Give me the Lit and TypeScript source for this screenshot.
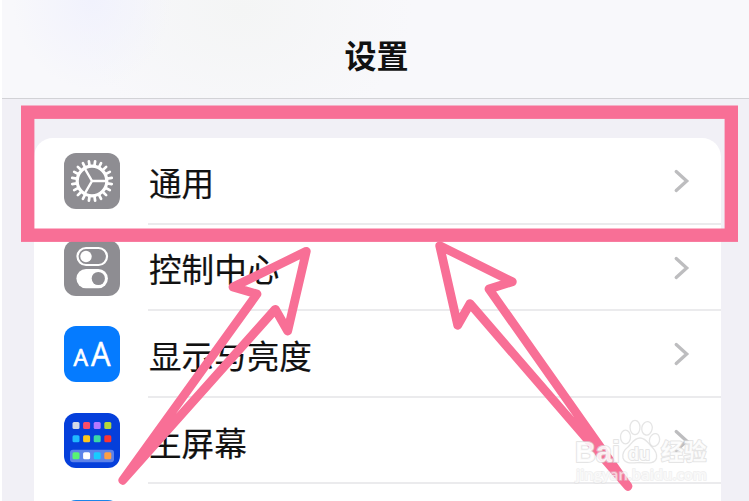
import { LitElement, html, css, svg } from "lit";
import { customElement, property } from "lit/decorators.js";

const APP_COLORS = [
  ["#d5dae6", "#fb4d68", "#b478ff", "#b4d83c"],
  ["#1fb8ff", "#ffc71c", "#3bd8a5", "#fb3434"],
  ["#58f573", "#ffffff", "#17cbff", "#ff9f45"],
];

const TEETH = Array.from({ length: 20 }, (_, i) => i * 18);

@customElement("setting-icon")
export class SettingIcon extends LitElement {
  static styles = css`
    :host {
      display: block;
      width: 56px;
      height: 56px;
    }

    svg {
      display: block;
    }

    .letters {
      font-family: "Open Sans", "Noto Sans", sans-serif;
      fill: #fff;
    }
  `;

  @property()
  name = "";

  private _gear() {
    return svg`
      <rect width="56" height="56" rx="12" fill="#8e8d92" />
      <g stroke="#fff" fill="none">
        ${TEETH.map(
          (a) => svg`<path
            d="M28 8V12.500"
            stroke-width="2.700"
            stroke-linecap="round"
            transform="rotate(${a + 9} 28 28)"
          />`
        )}
        <circle cx="28" cy="28" r="14.800" stroke-width="3.200" />
        <path d="M28 28H43M28 28L20.500 15M28 28L20.500 41" stroke-width="2.500" />
      </g>
    `;
  }

  private _switches() {
    return svg`
      <rect width="56" height="56" rx="12" fill="#8e8d92" />
      <rect x="13.500" y="8" width="29.500" height="17" rx="8.500" fill="none" stroke="#fff" stroke-width="2.200" />
      <circle cx="22" cy="16.500" r="5.700" fill="#fff" />
      <rect x="12.400" y="29" width="31.500" height="19.200" rx="9.600" fill="#fff" />
      <circle cx="34.300" cy="38.500" r="6.600" fill="#8e8d92" />
    `;
  }

  private _letters() {
    return svg`
      <rect width="56" height="56" rx="12" fill="#057bff" />
      <text class="letters" x="9.500" y="39.500" font-size="24.500" textLength="14.500" lengthAdjust="spacingAndGlyphs" stroke="#fff" stroke-width=".7">A</text>
      <text class="letters" x="27" y="39.500" font-size="32.500" textLength="19.500" lengthAdjust="spacingAndGlyphs" stroke="#fff" stroke-width=".5">A</text>
    `;
  }

  private _home() {
    const rows = [9, 22.3, 39.3];
    return svg`
      <rect width="56" height="55" rx="12" fill="#053fdb" />
      <rect x="6" y="36.800" width="44" height="12.500" rx="3" fill="#5c82ea" />
      ${APP_COLORS.map((row, r) =>
        row.map(
          (c, i) =>
            svg`<rect x=${8.5 + i * 10.6} y=${rows[r]} width="7" height="7" rx="1.500" fill=${c} />`
        )
      )}
    `;
  }

  render() {
    let body = svg`<rect width="56" height="56" rx="12" fill="#1b85ea" />`;
    if (this.name === "gear") body = this._gear();
    if (this.name === "switches") body = this._switches();
    if (this.name === "letters") body = this._letters();
    if (this.name === "home") body = this._home();
    return html`<svg width="56" height="56" viewBox="0 0 56 56">${body}</svg>`;
  }
}

@customElement("setting-row")
export class SettingRow extends LitElement {
  static styles = css`
    :host {
      display: flex;
      flex: none;
      box-sizing: border-box;
      height: 86.6px;
      padding-left: 30px;
    }

    .icon {
      display: flex;
      align-items: center;
      width: 84px;
    }

    .body {
      display: flex;
      flex: 1;
      align-items: center;
      justify-content: space-between;
      padding-right: 31px;
      border-bottom: 2px solid #ebebed;
    }

    .label {
      font-size: 32.6px;
      line-height: 48px;
      padding: 3px 0 0 1px;
      white-space: nowrap;
      color: #111;
      -webkit-text-stroke: 0.2px #111;
    }

    .chevron {
      padding-top: 2px;
    }
  `;

  @property()
  icon = "";

  @property()
  label = "";

  render() {
    return html`
      <div class="icon"><setting-icon name=${this.icon}></setting-icon></div>
      <div class="body">
        <span class="label">${this.label}</span>
        ${this.label
          ? html`<svg class="chevron" width="17" height="26" viewBox="0 0 17 26">
              <path
                d="M3.200 3.500L13.700 13L3.200 22.500"
                fill="none"
                stroke="#bdbdbf"
                stroke-width="3.300"
                stroke-linecap="round"
              />
            </svg>`
          : ""}
      </div>
    `;
  }
}

@customElement("app-root")
export default class AppRoot extends LitElement {
  static styles = css`
    :host {
      display: flex;
      flex-direction: column;
      position: relative;
      box-sizing: border-box;
      width: 749px;
      height: 501px;
      padding-left: 2px;
      overflow: hidden;
      background: #fff;
      font-family: "Noto Sans CJK SC", sans-serif;
    }

    .header {
      display: flex;
      flex: none;
      align-items: center;
      justify-content: center;
      box-sizing: border-box;
      height: 99px;
      padding: 9px 0 0 2px;
      border-bottom: 1.5px solid #d2d2d6;
      background: radial-gradient(
          ellipse 80px 90px at 90px 0,
          #f1f2fd,
          rgba(241, 242, 253, 0)
        ),
        radial-gradient(
          ellipse 170px 130px at 240px 10px,
          #f4f5f5,
          rgba(244, 245, 245, 0)
        ),
        #f8f8fb;
    }

    .title {
      font-size: 32px;
      line-height: 48px;
      font-weight: 700;
      color: #111;
    }

    .content {
      display: flex;
      flex: 1;
      min-height: 0;
      padding: 39px 28px 0 32px;
      background: #f1f0f6;
    }

    .card {
      display: flex;
      flex: 1;
      flex-direction: column;
      overflow: hidden;
      border-radius: 19px 19px 0 0;
      background: #fff;
    }

    .overlay {
      position: absolute;
      top: 0;
      left: 0;
    }

    .mark {
      font-family: "Liberation Sans", "Noto Sans CJK SC", sans-serif;
      font-weight: 700;
    }

    .outlined {
      paint-order: stroke;
      stroke-linejoin: round;
    }

    .site {
      font-family: "Open Sans", sans-serif;
      font-weight: 600;
    }
  `;

  private _annotations() {
    return svg`
      <g fill="none" stroke="#f86f96">
        <rect x="27.700" y="112.200" width="703.600" height="123" stroke-width="13.400" />
        <g stroke-width="8.800" stroke-linejoin="round">
          <path d="M306.300 251.300L233 287L257 294L122.700 480.300L275.300 309.300L287.700 331Z" />
          <path d="M439.700 245.700L512.300 281.700L489 289L628 486.300L470 303.700L457.700 325.300Z" />
        </g>
      </g>
    `;
  }

  private _watermark() {
    return svg`
      <g
        class="mark"
        fill="#fff"
        fill-opacity=".6"
        stroke="#dadada"
        stroke-opacity=".7"
        stroke-width="1.300"
      >
        <ellipse cx="625.500" cy="437" rx="5" ry="6.800" />
        <ellipse cx="635" cy="427.500" rx="5" ry="7.200" />
        <ellipse cx="647" cy="428.300" rx="5.200" ry="6.800" transform="rotate(10 647 428.300)" />
        <ellipse cx="654.500" cy="440" rx="5" ry="6.500" transform="rotate(15 654.500 440)" />
        <path d="M640 438C634 438 632 443 628 447C624 450 622 453 623 458C625 464 631 463 639.500 462.500C648 463 655 464 656.500 458C657.500 453 655 450 652 447C648 443 646 438 640 438Z" />
        <g class="outlined" fill-opacity=".85" stroke-width="2">
          <text x="575" y="461.500" font-size="29" textLength="45" lengthAdjust="spacingAndGlyphs">Bai</text>
          <text x="628" y="459.500" font-size="18.500" textLength="22" lengthAdjust="spacingAndGlyphs">du</text>
          <text x="661" y="460" font-size="22.800">经验</text>
        </g>
        <text class="outlined site" x="576" y="480" font-size="14.500" stroke-opacity=".4" stroke-width="1.800" textLength="131" lengthAdjust="spacingAndGlyphs">jingyan.baidu.com</text>
      </g>
    `;
  }

  render() {
    return html`
      <div class="header"><span class="title">设置</span></div>
      <div class="content">
        <div class="card">
          <setting-row icon="gear" label="通用"></setting-row>
          <setting-row icon="switches" label="控制中心"></setting-row>
          <setting-row icon="letters" label="显示与亮度"></setting-row>
          <setting-row icon="home" label="主屏幕"></setting-row>
          <setting-row icon="next"></setting-row>
        </div>
      </div>
      <svg class="overlay" width="749" height="501" viewBox="0 0 749 501">
        ${this._annotations()} ${this._watermark()}
      </svg>
    `;
  }
}
